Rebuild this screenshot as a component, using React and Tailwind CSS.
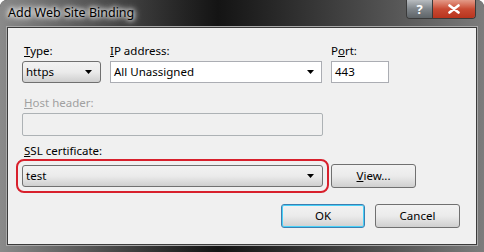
import React from 'react'

const font = { fontFamily: '"Noto Sans", "Open Sans", sans-serif' }

function Arrow() {
  return (
    <svg width="7" height="4" viewBox="0 0 7 4" className="shrink-0">
      <path d="M0 0h7L3.5 4z" fill="#000" />
    </svg>
  )
}

function Select({ value, className }) {
  return (
    <div className={`flex items-center justify-between h-[22px] rounded-[3px] border border-[#707070] bg-gradient-to-b from-[#f2f2f2] via-[#ebebeb] to-[#cfcfcf] pl-[3px] pr-[8px] ${className}`}>
      <span>{value}</span>
      <Arrow />
    </div>
  )
}

function Button({ children, focused, className }) {
  return (
    <div className={`flex items-center justify-center h-[24px] rounded-[3px] border ${focused ? 'border-[#3c7fb1] shadow-[inset_0_0_0_1px_#48d0f8]' : 'border-[#707070]'} bg-gradient-to-b from-[#f2f2f2] via-[#ebebeb] to-[#cfcfcf] ${className}`}>
      {children}
    </div>
  )
}

export default function App() {
  return (
    <div className="w-[484px] h-[252px] overflow-hidden bg-[#2a2a2a] rounded-t-[7px] text-[11.5px] leading-[18px] text-black relative" style={font}>
      <div className="absolute inset-0 bg-gradient-to-r from-[#8a8a8a] via-[#141414] via-45% to-[#7c7c7c]" />
      <div className="relative flex flex-col h-full px-[7px] pb-[7px]">
        <div className="h-[27px] flex items-start justify-between">
          <div className="pt-[4px] pl-[1px] text-[12.5px] text-black [text-shadow:0_0_8px_#fff,0_0_6px_#fff,0_0_4px_#fff]">Add Web Site Binding</div>
          <div className="flex mr-[1px] rounded-b-[4px] overflow-hidden border border-t-0 border-[#3a3a3a]">
            <div className="w-[26px] h-[18px] bg-gradient-to-b from-[#b8bcc0] via-[#7f858a] to-[#5e6468] flex items-center justify-center text-white font-bold text-[13px] leading-none border-r border-[#3a3a3a]">?</div>
            <div className="w-[42px] h-[18px] bg-gradient-to-b from-[#e39a88] via-[#c94a33] to-[#b8341e] flex items-center justify-center">
              <svg width="12" height="10" viewBox="0 0 12 10"><path d="M1.5 1.5l9 7M10.5 1.5l-9 7" stroke="#fff" strokeWidth="2.6" strokeLinecap="round" /></svg>
            </div>
          </div>
        </div>
        <div className="flex-1 bg-[#f0f0f0] border border-[#3b3b3b] shadow-[0_0_0_1px_#a8a8a8] px-[14px] pt-[14px]">
          <div className="flex gap-[9px]">
            <div className="flex flex-col">
              <div className="pl-[2px] h-[19px]"><u>T</u>ype:</div>
              <Select value="https" className="w-[79px]" />
            </div>
            <div className="flex flex-col">
              <div className="h-[19px]"><u>I</u>P address:</div>
              <div className="w-[212px] h-[22px] border border-[#abadb3] bg-white flex items-center justify-between pl-[3px] pr-[7px]">
                <span>All Unassigned</span>
                <Arrow />
              </div>
            </div>
            <div className="flex flex-col">
              <div className="h-[19px]">P<u>o</u>rt:</div>
              <div className="w-[58px] h-[22px] border border-[#abadb3] bg-white flex items-center pl-[3px]">443</div>
            </div>
          </div>
          <div className="mt-[11px] pl-[2px] h-[19px] text-[#a0a0a0]"><u>H</u>ost header:</div>
          <div className="w-[301px] h-[23px] border border-[#adb2b5] bg-[#f0f0f0] rounded-[2px]" />
          <div className="mt-[6px] pl-[2px] h-[17px]"><u>S</u>SL certificate:</div>
          <div className="flex items-center">
            <div className="-ml-[6px] p-[4px] border-[2px] border-[#d8202c] rounded-[8px]">
              <Select value="test" className="w-[301px]" />
            </div>
            <Button className="w-[85px] ml-[2px]"><span><u>V</u>iew...</span></Button>
          </div>
          <div className="flex justify-end gap-[10px] mt-[11px] pr-[2px]">
            <Button focused className="w-[84px]">OK</Button>
            <Button className="w-[85px]">Cancel</Button>
          </div>
        </div>
      </div>
    </div>
  )
}
